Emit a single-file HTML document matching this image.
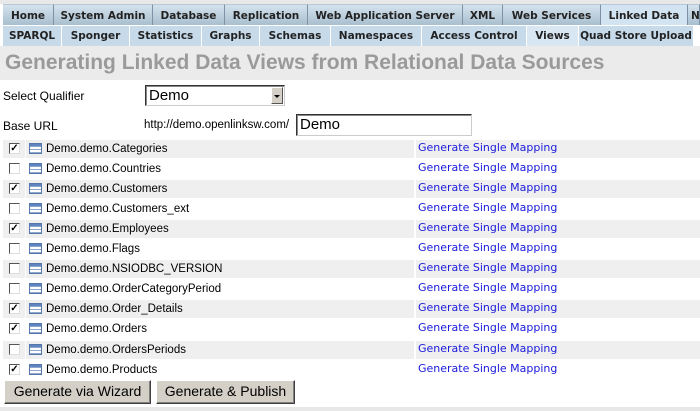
<!DOCTYPE html>
<html><head><meta charset="utf-8"><style>
*{margin:0;padding:0;box-sizing:border-box}
body{width:700px;height:411px;overflow:hidden;background:#fff;position:relative;font-family:"Liberation Sans",Arial,sans-serif;font-size:12px;color:#000}
.top{position:absolute;left:0;top:0;width:700px;height:4px;background:#e8e8e8}
.t{position:absolute;height:21px;top:4px;font:bold 10.5px "DejaVu Sans",sans-serif;color:#222;text-align:center;line-height:22px;background:linear-gradient(#d4e2ed,#a9bfcf);border-right:1px solid #7d93a5;border-top:1px solid #b9c8d4;white-space:nowrap;overflow:hidden}
.t.a{background:#d2e3f1}
.s{position:absolute;height:20px;top:26px;font:bold 10.5px "DejaVu Sans",sans-serif;color:#222;text-align:center;line-height:20px;background:#c7daea;border-right:1px solid #fff;white-space:nowrap;overflow:hidden}
.s.a{background:#d9e7f3}
.title{position:absolute;left:0;top:46px;width:700px;height:34px;background:#ebebeb;color:#9a9a9a;font:bold 21px "Liberation Sans",Arial,sans-serif;padding:5px 0 0 5px;white-space:nowrap}
.lbl{position:absolute;font-size:12px}
.sel{position:absolute;left:145px;top:85px;width:140px;height:21px;border:1px solid #333;border-right-color:#ccc;border-bottom-color:#ccc;box-shadow:inset 1px 1px 0 #888;font-size:15px;line-height:19px;padding-left:3px;background:#fff}
.sel b{position:absolute;right:1px;top:1px;width:12px;height:17px;background:#d4d0c8;border:1px solid #fff;border-right-color:#555;border-bottom-color:#555}
.sel b:after{content:"";position:absolute;left:2px;top:7px;border-left:3px solid transparent;border-right:3px solid transparent;border-top:3px solid #000}
.inp{position:absolute;left:296px;top:114px;width:176px;height:22px;border:1px solid #333;border-right-color:#ccc;border-bottom-color:#ccc;box-shadow:inset 1px 1px 0 #888;font-size:15px;line-height:20px;padding-left:3px}
.r{position:absolute;left:0;width:700px;height:18px}
.r.g .c1,.r.g .c2,.r.g .c3{background:#efefef}
.c1{position:absolute;left:3px;width:22px;height:18px}
.c2{position:absolute;left:26px;width:388px;height:18px;padding-left:20px;line-height:18px;font-size:11.5px}
.c3{position:absolute;left:416px;width:284px;height:18px;line-height:19px;padding:1px 0 0 2px;font:11px "DejaVu Sans",sans-serif;color:#1a1adb}
.cb{position:absolute;left:6px;top:3px;width:11px;height:11px;border:1px solid #555;border-right-color:#ddd;border-bottom-color:#ddd;background:#fff;font:bold 10px sans-serif;line-height:9px;text-align:center}
.ic{position:absolute;left:3px;top:3px;width:13px;height:11px;border:1px solid #5577aa;background:repeating-linear-gradient(#fff 0 2px,#8fa8cc 2px 3px);}
.ic:before{content:"";position:absolute;left:0;top:0;width:11px;height:2px;background:#5f85c0}
.btn{position:absolute;top:380px;height:24px;background:#d4d0c8;border:1px solid #fff;border-right-color:#404040;border-bottom-color:#404040;box-shadow:inset -1px -1px 0 #808080;font-size:14px;line-height:21px;text-align:center}
.bot{position:absolute;left:0;top:407px;width:700px;height:4px;background:#e8e8e8}
</style></head><body>
<div class="top"></div>
<div class="t" style="left:3px;width:51px">Home</div>
<div class="t" style="left:54px;width:99px">System Admin</div>
<div class="t" style="left:153px;width:72px">Database</div>
<div class="t" style="left:225px;width:83px">Replication</div>
<div class="t" style="left:308px;width:155px">Web Application Server</div>
<div class="t" style="left:463px;width:40px">XML</div>
<div class="t" style="left:503px;width:98px">Web Services</div>
<div class="t a" style="left:601px;width:87px">Linked Data</div>
<div class="t" style="left:688px;width:12px;text-align:left;padding-left:3px">N</div>
<div class="s" style="left:3px;width:59px">SPARQL</div>
<div class="s" style="left:62px;width:68px">Sponger</div>
<div class="s" style="left:130px;width:72px">Statistics</div>
<div class="s" style="left:202px;width:58px">Graphs</div>
<div class="s" style="left:260px;width:71px">Schemas</div>
<div class="s" style="left:331px;width:91px">Namespaces</div>
<div class="s" style="left:422px;width:105px">Access Control</div>
<div class="s a" style="left:527px;width:52px">Views</div>
<div class="s" style="left:579px;width:115px">Quad Store Upload</div>
<div class="title">Generating Linked Data Views from Relational Data Sources</div>
<div class="lbl" style="left:3px;top:89px">Select Qualifier</div>
<div class="sel">Demo<b></b></div>
<div class="lbl" style="left:3px;top:119px">Base URL</div>
<div class="lbl" style="left:144px;top:119px;font-size:11.5px">http://demo.openlinksw.com/</div>
<div class="inp">Demo</div>

<div class="r g" style="top:140px"><div class="c1"><div class="cb">✓</div></div><div class="c2"><div class="ic"></div>Demo.demo.Categories</div><div class="c3">Generate Single Mapping</div></div>
<div class="r" style="top:160px"><div class="c1"><div class="cb"></div></div><div class="c2"><div class="ic"></div>Demo.demo.Countries</div><div class="c3">Generate Single Mapping</div></div>
<div class="r g" style="top:180px"><div class="c1"><div class="cb">✓</div></div><div class="c2"><div class="ic"></div>Demo.demo.Customers</div><div class="c3">Generate Single Mapping</div></div>
<div class="r" style="top:200px"><div class="c1"><div class="cb"></div></div><div class="c2"><div class="ic"></div>Demo.demo.Customers_ext</div><div class="c3">Generate Single Mapping</div></div>
<div class="r g" style="top:220px"><div class="c1"><div class="cb">✓</div></div><div class="c2"><div class="ic"></div>Demo.demo.Employees</div><div class="c3">Generate Single Mapping</div></div>
<div class="r" style="top:240px"><div class="c1"><div class="cb"></div></div><div class="c2"><div class="ic"></div>Demo.demo.Flags</div><div class="c3">Generate Single Mapping</div></div>
<div class="r g" style="top:260px"><div class="c1"><div class="cb"></div></div><div class="c2"><div class="ic"></div>Demo.demo.NSIODBC_VERSION</div><div class="c3">Generate Single Mapping</div></div>
<div class="r" style="top:280px"><div class="c1"><div class="cb"></div></div><div class="c2"><div class="ic"></div>Demo.demo.OrderCategoryPeriod</div><div class="c3">Generate Single Mapping</div></div>
<div class="r g" style="top:300px"><div class="c1"><div class="cb">✓</div></div><div class="c2"><div class="ic"></div>Demo.demo.Order_Details</div><div class="c3">Generate Single Mapping</div></div>
<div class="r" style="top:320px"><div class="c1"><div class="cb">✓</div></div><div class="c2"><div class="ic"></div>Demo.demo.Orders</div><div class="c3">Generate Single Mapping</div></div>
<div class="r g" style="top:341px"><div class="c1"><div class="cb"></div></div><div class="c2"><div class="ic"></div>Demo.demo.OrdersPeriods</div><div class="c3">Generate Single Mapping</div></div>
<div class="r" style="top:361px"><div class="c1"><div class="cb">✓</div></div><div class="c2"><div class="ic"></div>Demo.demo.Products</div><div class="c3">Generate Single Mapping</div></div>

<div class="btn" style="left:4px;width:147px">Generate via Wizard</div>
<div class="btn" style="left:156px;width:139px">Generate &amp; Publish</div>
<div class="bot"></div>
</body></html>
